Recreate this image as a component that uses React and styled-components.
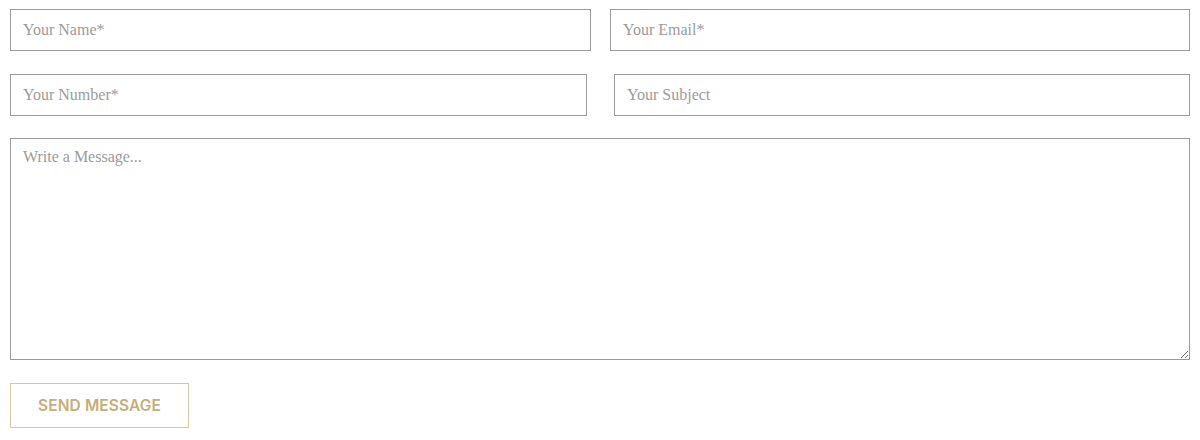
import React from "react";
import styled, { createGlobalStyle } from "styled-components";

const Global = createGlobalStyle`
  html, body { margin: 0; padding: 0; background: #fff; }
  body { font-family: "Liberation Serif", serif; }
  * { box-sizing: border-box; }
`;

const Form = styled.form`
  display: flex;
  flex-direction: column;
  padding: 9px 10px 0 10px;
  width: 1200px;
`;

const Row = styled.div`
  display: grid;
  grid-template-columns: ${(p) => p.$cols};
  column-gap: ${(p) => p.$gap}px;
  margin-bottom: ${(p) => p.$mb}px;
`;

const Field = styled.input`
  height: 42px;
  width: 100%;
  border: 1px solid #9a9a9a;
  padding: 0 12px;
  font-family: "Liberation Serif", serif;
  font-size: 16px;
  color: #555;
  outline: none;
  background: #fff;
  &::placeholder { color: #9b9b9b; }
`;

const Message = styled.textarea`
  height: 222px;
  width: 100%;
  border: 1px solid #9a9a9a;
  padding: 9px 12px;
  font-family: "Liberation Serif", serif;
  font-size: 16px;
  color: #555;
  outline: none;
  resize: vertical;
  margin: 0 0 23px 0;
  display: block;
  &::placeholder { color: #9b9b9b; }
`;

const Button = styled.button`
  align-self: flex-start;
  width: 179px;
  height: 45px;
  background: #fff;
  border: 1px solid #d9c7a3;
  color: #c8ad78;
  font-family: "Inter", "Open Sans", sans-serif;
  font-weight: 600;
  font-size: 15.5px;
  letter-spacing: 0.1px;
  text-transform: uppercase;
  cursor: pointer;
  padding: 0;
`;

export default function App() {
  return (
    <>
      <Global />
      <Form onSubmit={(e) => e.preventDefault()}>
        <Row $cols="581px 580px" $gap={19} $mb={23}>
          <Field placeholder="Your Name*" />
          <Field placeholder="Your Email*" />
        </Row>
        <Row $cols="577px 576px" $gap={27} $mb={22}>
          <Field placeholder="Your Number*" />
          <Field placeholder="Your Subject" />
        </Row>
        <Message placeholder="Write a Message..." />
        <Button type="submit">Send Message</Button>
      </Form>
    </>
  );
}
